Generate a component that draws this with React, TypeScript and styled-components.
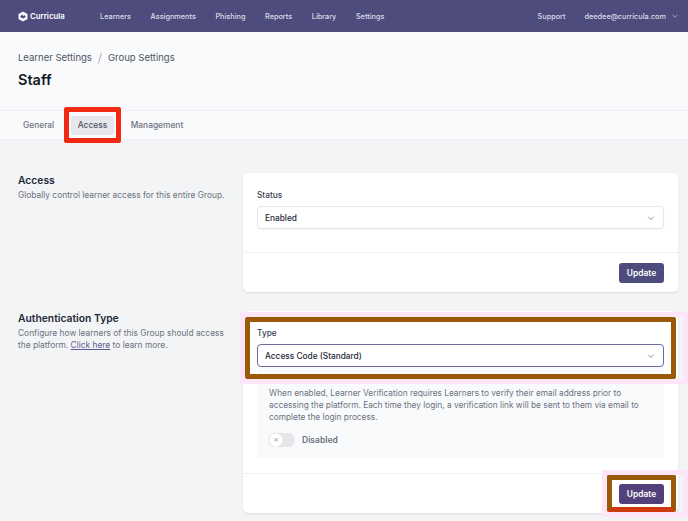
import React from "react";
import styled, { createGlobalStyle } from "styled-components";

const Global = createGlobalStyle`
  html, body { margin: 0; padding: 0; background: #f3f4f6; }
  body { font-family: Inter, "Liberation Sans", sans-serif; width: 688px; height: 521px; overflow: hidden; }
`;
const Page = styled.div`position: relative; width: 688px; height: 521px; overflow: hidden;`;
const Nav = styled.header`height: 32px; background: #4d4c7d; display: flex; align-items: center; padding: 0 9px 0 18px; color: #dcdce8; font-size: 7.3px; font-weight: 500;`;
const Logo = styled.div`display: flex; align-items: center; gap: 2px; width: 82px; color: #fff; font-size: 7.8px; font-weight: 600;`;
const NavLinks = styled.nav`display: flex; gap: 19.6px; flex: 1;`;
const NavRight = styled.div`display: flex; align-items: center;`;
const Email = styled.span`margin-left: 19px; margin-right: 5px;`;
const Header = styled.div`background: #f9fafb; border-bottom: 1px solid #eceef1; padding: 19px 18px 0; box-sizing: border-box; height: 79px;`;
const Crumbs = styled.div`display: flex; align-items: center; font-size: 9.5px; color: #4b5563; line-height: 14px;`;
const Slash = styled.span`margin: 0 6px; color: #9ca3af; font-weight: 300; font-size: 12px;`;
const Title = styled.h1`margin: 6px 0 0; font-size: 14.5px; line-height: 18px; font-weight: 600; color: #111827;`;
const Tabs = styled.div`height: 29px; box-sizing: border-box; background: #f9fafb; border-bottom: 1px solid #eceef1; display: flex; align-items: center; padding-left: 16px; gap: 9.5px;`;
const Tab = styled.div<{ $active?: boolean }>`padding: 0 7px; height: 19px; display: flex; align-items: center; border-radius: 3px; font-size: 8.4px; font-weight: 500; color: ${p => (p.$active ? "#4b5563" : "#6b7280")}; background: ${p => (p.$active ? "#e5e7eb" : "transparent")};`;
const Section = styled.section<{ $top: number }>`display: grid; grid-template-columns: 225px 435px; padding: ${p => p.$top}px 0 0 18px;`;
const Side = styled.div``;
const SideTitle = styled.h2`margin: 0 0 2px; font-size: 10.3px; line-height: 14px; font-weight: 600; color: #1f2937;`;
const SideText = styled.p`margin: 0; font-size: 8.4px; line-height: 12px; color: #6b7280; width: 212px;`;
const A = styled.span`color: #5b5a92; text-decoration: underline;`;
const Card = styled.div`background: #fff; border-radius: 5px; box-shadow: 0 1px 2px rgba(0,0,0,.1);`;
const CardBody = styled.div<{ $h: number; $top: number }>`height: ${p => p.$h}px; padding: ${p => p.$top}px 14px 0; box-sizing: border-box;`;
const Label = styled.div`font-size: 8.3px; line-height: 11px; font-weight: 500; color: #374151; margin-bottom: 5px;`;
const Select = styled.div<{ $focus?: boolean }>`height: 23px; box-sizing: border-box; border: 1px solid ${p => (p.$focus ? "#6d6a9e" : "#e5e7eb")}; border-radius: 4px; display: flex; align-items: center; justify-content: space-between; padding: 0 7px; font-size: 8.3px; color: #1f2937; font-weight: 500; box-shadow: 0 1px 1px rgba(0,0,0,.05);`;
const Foot = styled.div`border-top: 1px solid #f0f1f3; height: 40px; box-sizing: border-box; display: flex; align-items: center; justify-content: flex-end; padding: 0 14px;`;
const Button = styled.div<{ $tint?: boolean }>`width: 45px; height: 20px; display: flex; align-items: center; justify-content: center; background: ${p => (p.$tint ? "#533f7a" : "#4d4c7d")}; color: #fff; font-size: 8.4px; font-weight: 600; border-radius: 3px;`;
const Info = styled.div`background: #f9fafb; border-radius: 3px; height: 91px; box-sizing: border-box; padding: 20px 12px 0; font-size: 8.3px; line-height: 12px; color: #6b7280;`;
const ToggleRow = styled.div`display: flex; align-items: center; gap: 7px; margin-top: 10px; font-weight: 600; font-size: 8.5px; color: #6b7280;`;
const Toggle = styled.div`width: 26px; height: 14px; border-radius: 7px; background: #e5e7eb; position: relative;`;
const Knob = styled.div`position: absolute; left: 0; top: 0; width: 14px; height: 14px; border-radius: 50%; background: #fff; box-shadow: 0 0 1px rgba(0,0,0,.3); color: #9ca3af; font-size: 7px; line-height: 14px; text-align: center;`;
const Mark = styled.div<{ $x: number; $y: number; $w: number; $h: number; $c: string; $b?: string }>`position: absolute; left: ${p => p.$x}px; top: ${p => p.$y}px; width: ${p => p.$w}px; height: ${p => p.$h}px; box-sizing: border-box; border: 5px solid ${p => p.$c}; border-bottom-color: ${p => p.$b || p.$c}; border-radius: 2px; pointer-events: none;`;
const Glow = styled.div<{ $x: number; $y: number; $w: number; $h: number }>`position: absolute; left: ${p => p.$x}px; top: ${p => p.$y}px; width: ${p => p.$w}px; height: ${p => p.$h}px; box-sizing: border-box; border: 5px solid #fde6f8; pointer-events: none;`;

const Chevron = ({ size = 10, color = "#6b7280" }: { size?: number; color?: string }) => (
  <svg width={size} height={size} viewBox="0 0 20 20" fill="none"><path d="M5 8l5 5 5-5" stroke={color} strokeWidth="1.5" strokeLinecap="round" strokeLinejoin="round" /></svg>
);

export default function App() {
  return (
    <Page>
      <Global />
      <Nav>
        <Logo>
          <svg width="10" height="11" viewBox="0 0 20 22"><path d="M10 1l8 4.5c1 .6 1 1 1 2v7c0 1 0 1.400-1 2L10 21l-8-4.500c-1-.6-1-1-1-2v-7c0-1 0-1.400 1-2z" fill="#fff" /><path d="M4 12l4-5 3 3 2-2 3 4-6 3z" fill="#4d4c7d" /></svg>
          Curricula
        </Logo>
        <NavLinks>
          <span>Learners</span><span>Assignments</span><span>Phishing</span><span>Reports</span><span>Library</span><span>Settings</span>
        </NavLinks>
        <NavRight>
          <span>Support</span>
          <Email>deedee@curricula.com</Email>
          <Chevron size={8} color="#dcdce8" />
        </NavRight>
      </Nav>
      <Header>
        <Crumbs>Learner Settings<Slash>/</Slash>Group Settings</Crumbs>
        <Title>Staff</Title>
      </Header>
      <Tabs>
        <Tab>General</Tab>
        <Tab $active>Access</Tab>
        <Tab>Management</Tab>
      </Tabs>
      <Section $top={33}>
        <Side>
          <SideTitle>Access</SideTitle>
          <SideText>Globally control learner access for this entire Group.</SideText>
        </Side>
        <Card>
          <CardBody $h={79} $top={17}>
            <Label>Status</Label>
            <Select>Enabled<Chevron /></Select>
          </CardBody>
          <Foot><Button>Update</Button></Foot>
        </Card>
      </Section>
      <Section $top={19}>
        <Side>
          <SideTitle>Authentication Type</SideTitle>
          <SideText>Configure how learners of this Group should access the platform. <A>Click here</A> to learn more.</SideText>
        </Side>
        <Card>
          <CardBody $h={162} $top={17}>
            <Label>Type</Label>
            <Select $focus>Access Code (Standard)<Chevron /></Select>
            <Info>
              When enabled, Learner Verification requires Learners to verify their email address prior to accessing the platform. Each time they login, a verification link will be sent to them via email to complete the login process.
              <ToggleRow><Toggle><Knob>×</Knob></Toggle>Disabled</ToggleRow>
            </Info>
          </CardBody>
          <Foot><Button $tint>Update</Button></Foot>
        </Card>
      </Section>
      <Mark $x={64} $y={107} $w={57} $h={36} $c="#f02a12" />
      <Glow $x={240} $y={312} $w={448} $h={72} />
      <Mark $x={245} $y={317} $w={431} $h={62} $c="#9a5a08" />
      <Glow $x={602} $y={470} $w={86} $h={47} />
      <Mark $x={607} $y={475} $w={69} $h={37} $c="#9a5a08" $b="#d03a10" />
    </Page>
  );
}
